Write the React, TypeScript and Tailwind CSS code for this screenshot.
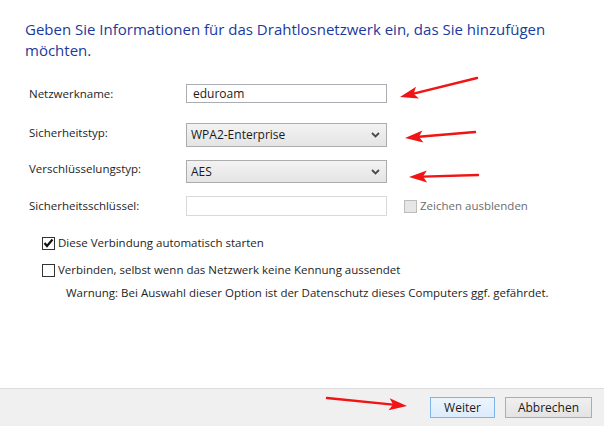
import type { ReactNode } from "react"

const arrows = [
  { x1: 477, y1: 78, x2: 400, y2: 97 },
  { x1: 475, y1: 132, x2: 405, y2: 138 },
  { x1: 478, y1: 175, x2: 409, y2: 177 },
  { x1: 327, y1: 398, x2: 407, y2: 406 },
]

function Arrow({ x1, y1, x2, y2 }: { x1: number; y1: number; x2: number; y2: number }) {
  const dx = x2 - x1
  const dy = y2 - y1
  const len = Math.hypot(dx, dy)
  const ux = dx / len
  const uy = dy / len
  const bx = x2 - ux * 18
  const by = y2 - uy * 18
  const head = `${x2},${y2} ${bx - uy * 6},${by + ux * 6} ${bx + ux * 4},${by + uy * 4} ${bx + uy * 6},${by - ux * 6}`
  return (
    <g>
      <line x1={x1} y1={y1} x2={bx + ux * 4} y2={by + uy * 4} stroke="#f01414" strokeWidth={2.4} strokeLinecap="round" />
      <polygon points={head} fill="#f01414" />
    </g>
  )
}

function Chevron() {
  return (
    <svg width="9" height="6" viewBox="0 0 9 6" className="shrink-0">
      <path d="M1 1 L4.5 4.5 L8 1" fill="none" stroke="#4a4a4a" strokeWidth="1.8" />
    </svg>
  )
}

function Row({ label, children, shift }: { label: string; children: ReactNode; shift?: boolean }) {
  return (
    <div className="flex items-center">
      <div className={shift ? "w-[161px] pl-[4px] mb-[5px]" : "w-[161px] pl-[4px]"}>{label}</div>
      {children}
    </div>
  )
}

function Select({ value, tall }: { value: string; tall?: boolean }) {
  return (
    <div
      className={`flex w-[201px] items-center justify-between border border-[#acacac] bg-gradient-to-b from-[#f3f3f3] to-[#e4e4e4] pl-[4px] pr-[6px] text-[12px] text-[#1a1a1a] ${
        tall ? "h-[24px]" : "h-[23px]"
      }`}
    >
      <span>{value}</span>
      <Chevron />
    </div>
  )
}

function Check({ checked }: { checked?: boolean }) {
  return (
    <span className="flex h-[13px] w-[13px] shrink-0 items-center justify-center border border-[#333] bg-white">
      {checked ? (
        <svg width="11" height="10" viewBox="0 0 11 10">
          <path d="M1.5 5 L4 8 L9.5 1.5" fill="none" stroke="#111" strokeWidth="2.2" />
        </svg>
      ) : null}
    </span>
  )
}

export default function App() {
  return (
    <div className="relative flex h-[426px] w-[604px] flex-col overflow-hidden bg-white font-['Open_Sans',sans-serif] text-[11.5px] text-[#1e1e1e]">
      <main className="flex-1 pl-[25px] pt-[19px]">
        <h1 className="text-[15px] leading-[21px] text-[#1a3a9e]">
          Geben Sie Informationen für das Drahtlosnetzwerk ein, das Sie hinzufügen
          <br />
          möchten.
        </h1>

        <div className="mt-[23px] flex flex-col">
          <Row label="Netzwerkname:">
            <div className="flex h-[19px] w-[201px] items-center border border-[#abadb3] bg-white pl-[6px] text-[12px] text-[#1a1a1a]">
              eduroam
            </div>
          </Row>
          <div className="mt-[20px]">
            <Row label="Sicherheitstyp:" shift>
              <Select value="WPA2-Enterprise" tall />
            </Row>
          </div>
          <div className="mt-[13px]">
            <Row label="Verschlüsselungstyp:" shift>
              <Select value="AES" />
            </Row>
          </div>
          <div className="mt-[13px]">
            <Row label="Sicherheitsschlüssel:">
              <div className="h-[20px] w-[201px] border border-[#d9d9d9] bg-white" />
              <div className="ml-[17px] flex items-center gap-[3px] text-[#6d6d6d]">
                <span className="h-[13px] w-[13px] border border-[#bcbcbc] bg-[#e6e6e6]" />
                Zeichen ausblenden
              </div>
            </Row>
          </div>
        </div>

        <div className="mt-[19px] flex flex-col pl-[17px] leading-[16px]">
          <label className="flex items-center gap-[3px]">
            <Check checked />
            Diese Verbindung automatisch starten
          </label>
          <label className="mt-[11px] flex items-center gap-[3px]">
            <Check />
            Verbinden, selbst wenn das Netzwerk keine Kennung aussendet
          </label>
          <p className="mt-[7px] pl-[24px]">
            Warnung: Bei Auswahl dieser Option ist der Datenschutz dieses Computers ggf. gefährdet.
          </p>
        </div>
      </main>

      <footer className="flex h-[38px] items-center justify-end gap-[10px] border-t border-[#dcdcdc] bg-[#f0f0f0] pr-[12px] text-[12px] text-[#1a1a1a]">
        <button className="h-[21px] w-[65px] border border-[#7eb4ea] bg-gradient-to-b from-[#ecf4fc] to-[#dcecfc]">
          Weiter
        </button>
        <button className="h-[21px] w-[87px] border border-[#adadad] bg-gradient-to-b from-[#f0f0f0] to-[#e3e3e3]">
          Abbrechen
        </button>
      </footer>

      <svg className="pointer-events-none absolute inset-0" width="604" height="426">
        {arrows.map((a, i) => (
          <Arrow key={i} {...a} />
        ))}
      </svg>
    </div>
  )
}
